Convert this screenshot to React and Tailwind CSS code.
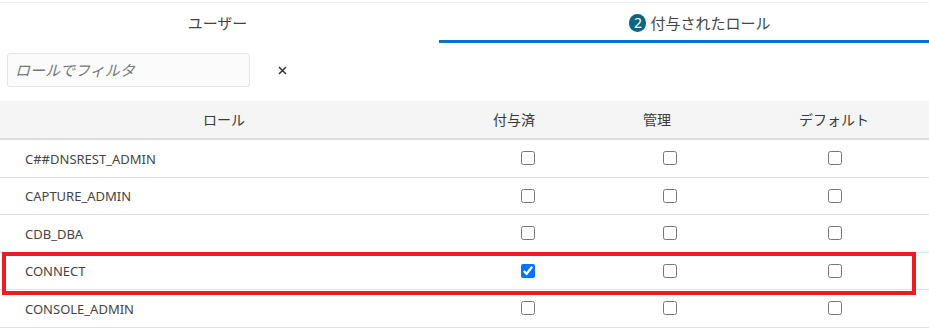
const roles = [
  { name: "C##DNSREST_ADMIN", granted: false },
  { name: "CAPTURE_ADMIN", granted: false },
  { name: "CDB_DBA", granted: false },
  { name: "CONNECT", granted: true, marked: true },
  { name: "CONSOLE_ADMIN", granted: false },
];

const font = { fontFamily: '"Noto Sans", "Noto Sans CJK JP", sans-serif' };

function Box({ checked }) {
  return <input type="checkbox" defaultChecked={checked} className="m-0 h-[14px] w-[14px]" />;
}

export default function App() {
  return (
    <div className="h-[332px] w-[929px] overflow-hidden bg-white text-[#3a3a3a]" style={font}>
      <div className="mt-[2px] border-t border-[#ececec]" />
      <div className="flex h-[40px] text-[15px] text-[#444]">
        <div className="flex w-[439px] items-center justify-center pr-[4px]">ユーザー</div>
        <div className="flex flex-1 items-center justify-center border-b-[3px] border-[#0572ce] pl-[32px] pt-[3px]">
          <span className="mr-[4px] flex h-[18px] w-[17px] items-center justify-center rounded-full bg-[#0d6581] text-[14px] leading-none text-white">
            2
          </span>
          付与されたロール
        </div>
      </div>

      <div className="flex h-[58px] items-start pt-[10px]">
        <input
          placeholder="ロールでフィルタ"
          className="ml-[7px] h-[34px] w-[243px] rounded-[3px] border border-[#e4e4e4] bg-[#fbfbfb] px-[7px] text-[15px] italic placeholder:text-[#777] focus:outline-none"
        />
        <button className="ml-[28px] mt-[13px] text-[#333]">
          <svg width="9" height="9" viewBox="0 0 9 9">
            <path d="M1 1L8 8M8 1L1 8" stroke="#333" strokeWidth="1.5" />
          </svg>
        </button>
      </div>

      <div className="grid h-[39px] grid-cols-[448px_160px_124px_1fr] border-b-2 border-[#dcdcdc] bg-[#f5f5f5] text-[14px]">
        <div className="flex items-center justify-center">ロール</div>
        <div className="flex items-center justify-center pr-[28px]">付与済</div>
        <div className="flex items-center justify-center pr-[26px]">管理</div>
        <div className="flex items-center justify-center pl-[7px]">デフォルト</div>
      </div>

      {roles.map((r) => (
        <div
          key={r.name}
          className="relative grid h-[37.5px] grid-cols-[448px_160px_124px_1fr] border-b border-[#e0e0e0] text-[13px]"
        >
          <div className="flex items-center pl-[25px] pt-[2px] text-[#444]">{r.name}</div>
          <div className="flex items-center justify-center">
            <Box checked={r.granted} />
          </div>
          <div className="flex items-center justify-center">
            <Box />
          </div>
          <div className="flex items-center justify-center pl-[9px]">
            <Box />
          </div>
          {r.marked && (
            <div className="pointer-events-none absolute left-[2px] top-[-1px] h-[43px] w-[914px] border-[4px] border-[#ec1c24]" />
          )}
        </div>
      ))}
    </div>
  );
}
